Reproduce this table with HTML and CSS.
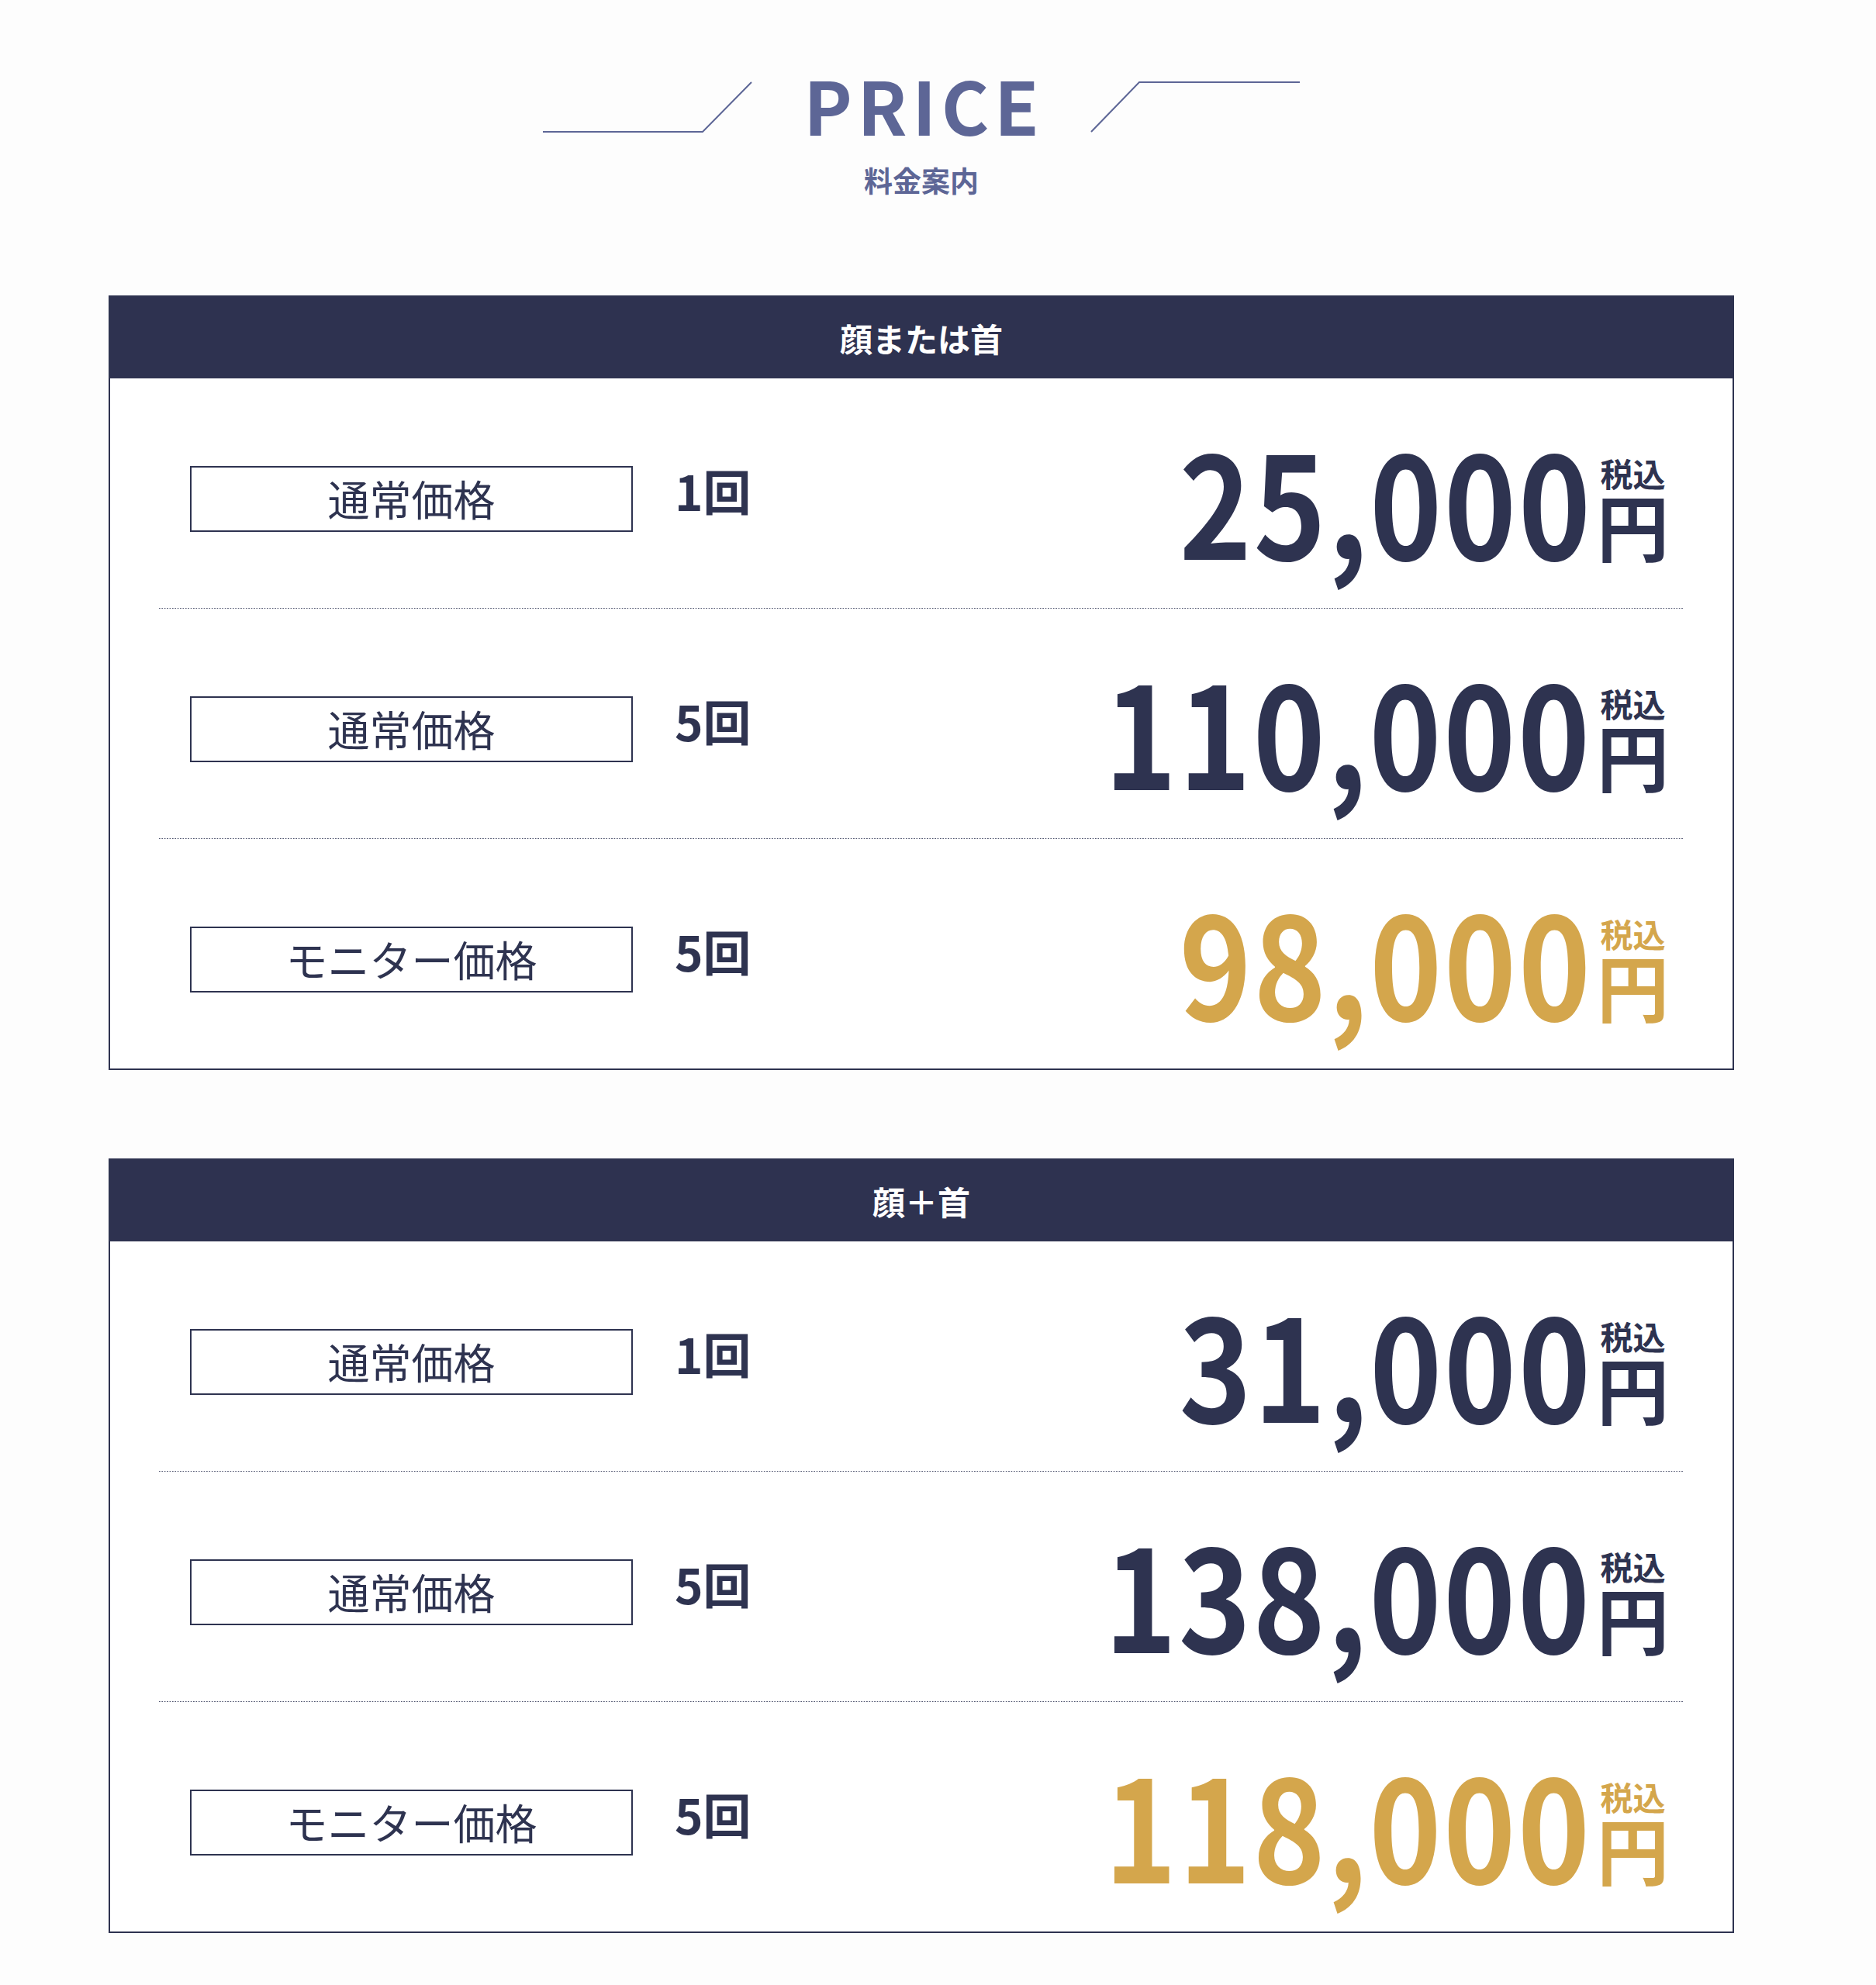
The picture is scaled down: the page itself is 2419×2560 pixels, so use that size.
FILE: index.html
```html
<!DOCTYPE html>
<html lang="ja">
<head>
<meta charset="utf-8">
<title>PRICE 料金案内</title>
<link rel="stylesheet" href="styles.css">
</head>
<body>
<main class="page">
  <header class="heading">
    <div class="title-row">
      <svg class="deco" width="270" height="66" viewBox="0 0 270 66"><path d="M0 65 H206 L269 1" fill="none" stroke="#5d6696" stroke-width="2"/></svg>
      <h1 class="title">PRICE</h1>
      <svg class="deco" width="270" height="66" viewBox="0 0 270 66"><path d="M1 65 L63 1 H270" fill="none" stroke="#5d6696" stroke-width="2"/></svg>
    </div>
    <p class="subtitle">料金案内</p>
  </header>

  <div class="cards">
    <section class="card">
      <h2 class="card-head">顔または首</h2>
      <div class="card-body">
        <div class="row">
          <div class="label">通常価格</div>
          <div class="count">1回</div>
          <div class="price"><span class="num">25,000</span><span class="unit"><span class="tax">税込</span><span class="yen">円</span></span></div>
        </div>
        <div class="row">
          <div class="label">通常価格</div>
          <div class="count">5回</div>
          <div class="price"><span class="num">110,000</span><span class="unit"><span class="tax">税込</span><span class="yen">円</span></span></div>
        </div>
        <div class="row">
          <div class="label">モニター価格</div>
          <div class="count">5回</div>
          <div class="price gold"><span class="num">98,000</span><span class="unit"><span class="tax">税込</span><span class="yen">円</span></span></div>
        </div>
      </div>
    </section>

    <section class="card">
      <h2 class="card-head">顔＋首</h2>
      <div class="card-body">
        <div class="row">
          <div class="label">通常価格</div>
          <div class="count">1回</div>
          <div class="price"><span class="num">31,000</span><span class="unit"><span class="tax">税込</span><span class="yen">円</span></span></div>
        </div>
        <div class="row">
          <div class="label">通常価格</div>
          <div class="count">5回</div>
          <div class="price"><span class="num">138,000</span><span class="unit"><span class="tax">税込</span><span class="yen">円</span></span></div>
        </div>
        <div class="row">
          <div class="label">モニター価格</div>
          <div class="count">5回</div>
          <div class="price gold"><span class="num">118,000</span><span class="unit"><span class="tax">税込</span><span class="yen">円</span></span></div>
        </div>
      </div>
    </section>
  </div>
</main>
</body>
</html>
```

FILE: styles.css
```css
* { box-sizing: border-box; }

html, body {
  margin: 0;
  padding: 0;
  background: #fdfdfd;
}

body {
  font-family: "Noto Sans CJK JP", "Noto Sans", sans-serif;
  color: #2e3350;
}

.page {
  padding: 83px 183px 68px 140px;
}

.heading {
  display: flex;
  flex-direction: column;
  align-items: center;
}

.title-row {
  display: flex;
  justify-content: center;
  align-items: flex-start;
  gap: 66px;
}

.deco {
  display: block;
  margin-top: 22px;
}

.title {
  margin: 4px -0.07em 0 0;
  font-size: 94px;
  font-weight: 700;
  line-height: 1;
  letter-spacing: 0.07em;
  color: #5d6696;
}

.subtitle {
  margin: 33px 0 0;
  font-size: 37px;
  font-weight: 700;
  line-height: 1;
  color: #5d6696;
}

.cards {
  margin-top: 130px;
  display: flex;
  flex-direction: column;
  gap: 114px;
}

.card {
  border: 2px solid #2e3350;
  background: #ffffff;
}

.card-head {
  margin: 0;
  height: 105px;
  display: flex;
  align-items: center;
  justify-content: center;
  background: #2e3250;
  color: #ffffff;
  font-size: 42px;
  font-weight: 700;
  line-height: 1;
}

.card-body {
  padding: 0 63px;
}

.row {
  display: flex;
  align-items: center;
  padding: 64px 19px 51px 40px;
  background-image: linear-gradient(to right, #50556f 2px, transparent 2px);
  background-size: 3.4px 1px;
  background-repeat: repeat-x;
  background-position: left bottom;
}

.row:last-child {
  background-image: none;
  padding-bottom: 50px;
}

.label {
  width: 571px;
  height: 85px;
  flex: none;
  border: 2px solid #2e3350;
  display: flex;
  align-items: center;
  justify-content: center;
  font-size: 54px;
  font-weight: 400;
  line-height: 1;
  color: #2e3350;
}

.count {
  margin: 0 0 22px 54px;
  font-size: 62px;
  font-weight: 700;
  line-height: 1;
}

.price {
  margin-left: auto;
  display: flex;
  align-items: flex-end;
  color: #2e3350;
}

.price.gold {
  color: #d4a64c;
}

.num {
  display: block;
  font-size: 182px;
  font-weight: 700;
  line-height: 1;
  letter-spacing: 0.015em;
  transform: scaleX(0.87);
  transform-origin: right center;
}

.unit {
  display: flex;
  flex-direction: column;
  align-items: center;
  margin: 0 0 11px 6px;
  font-weight: 700;
}

.tax {
  font-size: 42px;
  line-height: 40px;
}

.yen {
  font-size: 93px;
  line-height: 93px;
}
```
